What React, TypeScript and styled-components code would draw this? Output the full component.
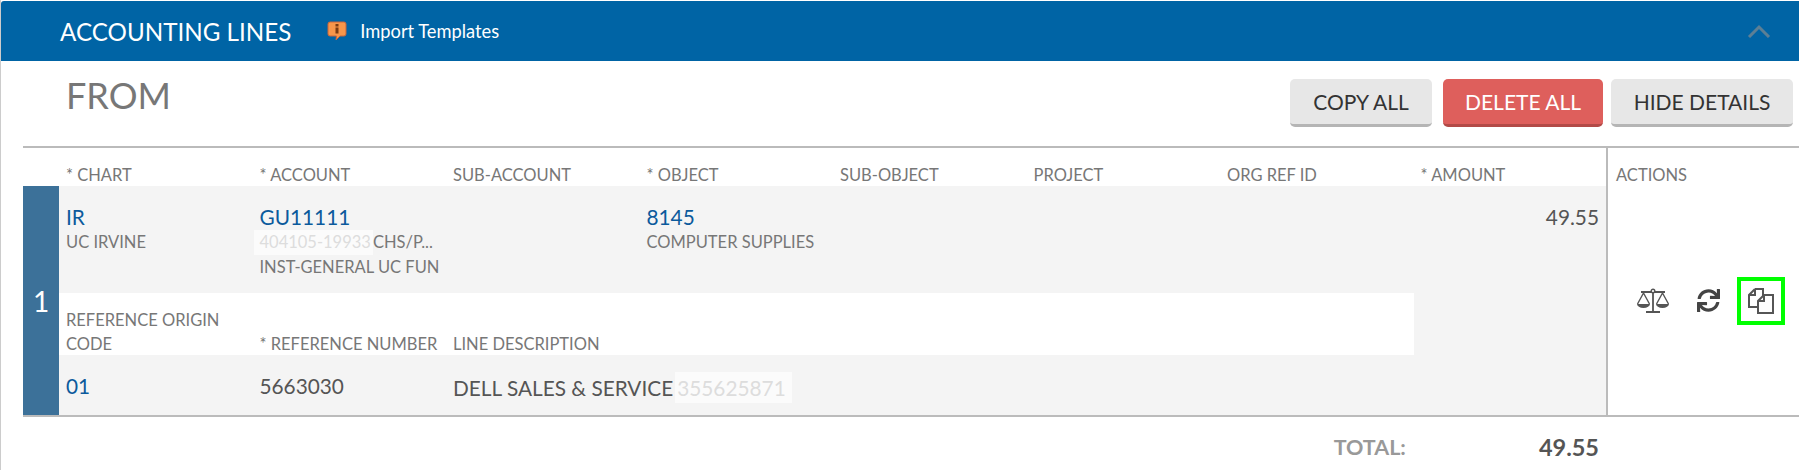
import React from "react";
import styled, { createGlobalStyle } from "styled-components";
import { FaSync } from "react-icons/fa";

const GlobalStyle = createGlobalStyle`
  html, body { margin: 0; padding: 0; background: #fff; }
  body { font-family: Lato, "Open Sans", sans-serif; color: #555; }
`;

/* ================== STYLES ================== */

const Panel = styled.div`
  width: 1799px;
  height: 470px;
  box-sizing: border-box;
  padding-top: 1px;
  border-left: 1px solid #ccc;
  overflow: hidden;
`;

const Header = styled.div`
  display: flex;
  align-items: center;
  height: 60px;
  padding: 0 28px 0 59px;
  background: #0064a5;
  border-radius: 3px 0 0 0;
  color: #fff;
`;

const HeaderTitle = styled.span`
  font-size: 24.2px;
  margin-right: 36px;
`;

const ImportLink = styled.span`
  display: flex;
  align-items: center;
  gap: 13px;
  font-size: 18.3px;
`;

const Collapse = styled.svg`
  margin-left: auto;
  width: 24px;
  height: 14px;
  fill: none;
  stroke: #5c7f95;
  stroke-width: 3;
`;

const TitleRow = styled.div`
  display: flex;
  justify-content: space-between;
  height: 85px;
  box-sizing: border-box;
  padding: 18px 6px 0 65px;
`;

const Title = styled.h2`
  margin: -6px 0 0;
  font-size: 36px;
  line-height: 44px;
  font-weight: 400;
  color: #777;
`;

const ButtonGroup = styled.div`
  display: flex;
  gap: 8px;
`;

const Button = styled.button<{ $danger?: boolean; $width: number; $gapRight?: number }>`
  width: ${({ $width }) => $width}px;
  height: 48px;
  margin-right: ${({ $gapRight }) => $gapRight || 0}px;
  padding: 0;
  border: 0;
  border-bottom: 3px solid ${({ $danger }) => ($danger ? "#b24a47" : "#b5b5b5")};
  border-radius: 5px;
  background: ${({ $danger }) => ($danger ? "#de5f5c" : "#e7e7e7")};
  color: ${({ $danger }) => ($danger ? "#fff" : "#333")};
  font-family: inherit;
  font-size: 21px;
`;

const Section = styled.div`
  display: flex;
  margin-left: 22px;
  border-top: 2px solid #bbb;
  border-bottom: 2px solid #bbb;
`;

const Lines = styled.div`
  display: grid;
  grid-template-columns: 36px repeat(7, 193.5px) 1fr;
  grid-template-rows: 38px 107px 62px 60px;
  width: 1583px;
  border-right: 2px solid #bbb;
  box-sizing: content-box;
`;

const NumberCell = styled.div`
  grid-column: 1;
  grid-row: 2 / 5;
  display: flex;
  align-items: center;
  justify-content: center;
  background: #3c7199;
  color: #fff;
  font-size: 28px;
`;

const Band = styled.div<{ $row: number; $shaded?: boolean }>`
  grid-column: 2 / -1;
  grid-row: ${({ $row }) => $row};
  display: grid;
  grid-template-columns: subgrid;
  background: ${({ $shaded }) => ($shaded ? "#f4f4f4" : "#fff")};
`;

const Label = styled.div<{ $colStart?: number }>`
  grid-column: ${({ $colStart }) => $colStart || "auto"};
  padding: 0 4px 0 7px;
  margin-bottom: -1px;
  align-self: end;
  font-size: 16.5px;
  line-height: 24px;
  color: #777;
`;

const Cell = styled.div<{ $col?: number }>`
  grid-column: ${({ $col }) => $col || "auto"};
  padding: 17px 0 0 7px;
  white-space: nowrap;
`;

const Value = styled.div<{ $link?: boolean }>`
  font-size: 20.8px;
  line-height: 27px;
  color: ${({ $link }) => ($link ? "#0b5a9c" : "#555")};
`;

const Sub = styled.div`
  font-size: 16.5px;
  line-height: 24px;
  color: #777;
`;

const Masked = styled.span<{ $large?: boolean }>`
  display: inline-block;
  margin-left: ${({ $large }) => ($large ? "2px" : "-6px")};
  padding: ${({ $large }) => ($large ? "2px 6px 2px 2px" : "0 2px 1px 6px")};
  background: #fbfbfb;
  color: #ddd;
`;

const AmountFill = styled.div`
  grid-column: 8;
  background: #f4f4f4;
`;

const Amount = styled.div`
  grid-column: 8;
  padding: 17px 7px 0 0;
  text-align: right;
  font-size: 20.8px;
  line-height: 27px;
  color: #555;
`;

const Actions = styled.div`
  display: flex;
  flex-direction: column;
  flex: 1;
  padding-left: 8px;
`;

const ActionsLabel = styled.div`
  height: 38px;
  line-height: 54px;
  font-size: 16.5px;
  color: #777;
`;

const ActionIcons = styled.div`
  flex: 1;
  display: flex;
  align-items: center;
  padding-left: 10px;
`;

const ActionIcon = styled.span<{ $width: number; $highlight?: boolean }>`
  display: flex;
  align-items: center;
  justify-content: center;
  width: ${({ $width }) => $width}px;
  height: 48px;
  box-sizing: border-box;
  color: #444;
  border: ${({ $highlight }) => ($highlight ? "4px solid #00ff00" : "0")};
`;

const TotalRow = styled.div`
  display: flex;
  align-items: center;
  justify-content: flex-end;
  height: 60px;
  padding: 0 200px 0 0;
`;

const TotalLabel = styled.span`
  margin-right: 133px;
  font-size: 21.5px;
  font-weight: 700;
  color: #999;
`;

const TotalValue = styled.span`
  font-size: 23.5px;
  font-weight: 700;
  color: #555;
`;

/* ================== ICONS ================== */

const InfoBubble = () => (
  <svg width="20" height="20" viewBox="0 0 20 20">
    <path d="M3 1h14a2 2 0 0 1 2 2v10a2 2 0 0 1-2 2h-4l-4 4 .5-4H3a2 2 0 0 1-2-2V3a2 2 0 0 1 2-2z" fill="#f7964a" stroke="#c9653a" strokeWidth="1" />
    <rect x="8.5" y="3" width="3" height="2.5" fill="#7a3b12" />
    <rect x="8.5" y="6.5" width="3" height="6" fill="#7a3b12" />
  </svg>
);

const ScaleIcon = () => (
  <svg width="34" height="26" viewBox="0 0 34 26" fill="none" stroke="#555" strokeWidth="1.4">
    <path d="M5 4h24M17 3v20M10 24h14" strokeWidth="1.8" />
    <circle cx="17" cy="3" r="1.8" fill="#fff" />
    <path d="M7.5 5 1.5 16M7.5 5l6 11M26.5 5l-6 11M26.5 5l6 11" />
    <path d="M1 16h13a6.5 4 0 0 1-13 0zM20 16h13a6.5 4 0 0 1-13 0z" fill="#555" stroke="none" />
  </svg>
);

const CopyIcon = () => (
  <svg width="28" height="28" viewBox="0 0 28 28" fill="none" stroke="#555" strokeWidth="2">
    <path d="M8 2h8v8M8 2 2 8v12h8M8 2v6H2" />
    <path d="M17 8h9v18H11V14z" fill="#fdfdfd" />
    <path d="M17 8v6h-6" />
  </svg>
);

/* ================== COMPONENT ================== */

export default function App() {
  return (
    <Panel>
      <GlobalStyle />
      <Header>
        <HeaderTitle>ACCOUNTING LINES</HeaderTitle>
        <ImportLink>
          <InfoBubble />
          Import Templates
        </ImportLink>
        <Collapse viewBox="0 0 24 14">
          <polyline points="2,13 12,3 22,13" />
        </Collapse>
      </Header>

      <TitleRow>
        <Title>FROM</Title>
        <ButtonGroup>
          <Button $width={142} $gapRight={3}>COPY ALL</Button>
          <Button $width={160} $danger>DELETE ALL</Button>
          <Button $width={182}>HIDE DETAILS</Button>
        </ButtonGroup>
      </TitleRow>

      <Section>
        <Lines>
          <Band $row={1}>
            {["* CHART", "* ACCOUNT", "SUB-ACCOUNT", "* OBJECT", "SUB-OBJECT", "PROJECT", "ORG REF ID", "* AMOUNT"].map((l) => (
              <Label key={l}>{l}</Label>
            ))}
          </Band>

          <NumberCell>1</NumberCell>

          <Band $row={2} $shaded>
            <Cell $col={1}>
              <Value $link>IR</Value>
              <Sub>UC IRVINE</Sub>
            </Cell>
            <Cell $col={2}>
              <Value $link>GU11111</Value>
              <Sub><Masked>404105-19933</Masked>CHS/P...</Sub>
              <Sub>INST-GENERAL UC FUN</Sub>
            </Cell>
            <Cell $col={4}>
              <Value $link>8145</Value>
              <Sub>COMPUTER SUPPLIES</Sub>
            </Cell>
            <Amount>49.55</Amount>
          </Band>

          <Band $row={3}>
            <Label $colStart={1}>REFERENCE ORIGIN CODE</Label>
            <Label $colStart={2}>* REFERENCE NUMBER</Label>
            <Label $colStart={3}>LINE DESCRIPTION</Label>
            <AmountFill />
          </Band>

          <Band $row={4} $shaded>
            <Cell $col={1}><Value $link>01</Value></Cell>
            <Cell $col={2}><Value>5663030</Value></Cell>
            <Cell $col={3}>
              <Value>DELL SALES &amp; SERVICE<Masked $large>355625871</Masked></Value>
            </Cell>
          </Band>
        </Lines>

        <Actions>
          <ActionsLabel>ACTIONS</ActionsLabel>
          <ActionIcons>
            <ActionIcon $width={53}><ScaleIcon /></ActionIcon>
            <ActionIcon $width={58}><FaSync size={23} /></ActionIcon>
            <ActionIcon $width={48} $highlight><CopyIcon /></ActionIcon>
          </ActionIcons>
        </Actions>
      </Section>

      <TotalRow>
        <TotalLabel>TOTAL:</TotalLabel>
        <TotalValue>49.55</TotalValue>
      </TotalRow>
    </Panel>
  );
}
